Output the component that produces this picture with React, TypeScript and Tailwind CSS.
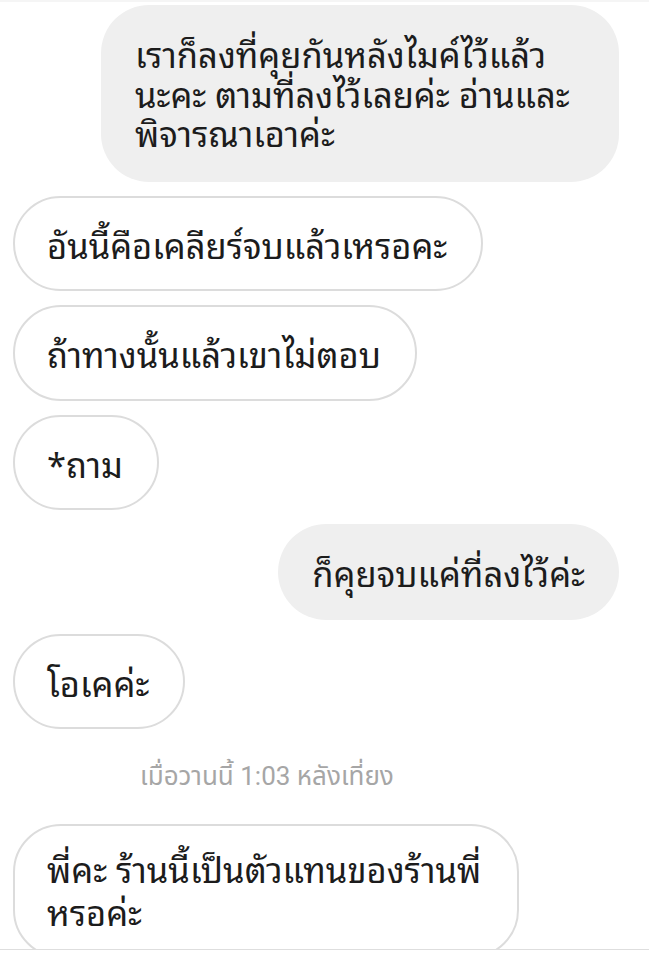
import React from "react";

const font = { fontFamily: '"Noto Sans Thai Looped", "Noto Sans Thai", "Noto Sans", Roboto, sans-serif' };

function Left({ children, className = "" }: { children: React.ReactNode; className?: string }) {
  return (
    <div className="flex justify-start">
      <div
        className={`bg-white border-2 border-[#dcdcdc] rounded-[48px] pl-[32px] pr-[34px] py-[24px] text-[34.5px] leading-[43.5px] text-[#1c1c1c] whitespace-nowrap ${className}`}
      >
        {children}
      </div>
    </div>
  );
}

function Right({ children, className = "" }: { children: React.ReactNode; className?: string }) {
  return (
    <div className="flex justify-end">
      <div
        className={`bg-[#efefef] rounded-[48px] pl-[34px] pr-[34px] py-[26px] text-[34.5px] leading-[43.5px] text-[#1c1c1c] whitespace-nowrap ${className}`}
      >
        {children}
      </div>
    </div>
  );
}

export default function App() {
  return (
    <div className="w-[649px] h-[960px] bg-white overflow-hidden flex flex-col" style={font}>
      <div className="h-[2px] bg-[#f5f5f5] shrink-0" />
      <div className="h-[947px] shrink-0 overflow-hidden flex flex-col gap-[14px] pl-[13px] pr-[30px] pt-[3px]">
        <Right className="w-[518px] rounded-[44px] !pt-[28px] !pb-[30px] !leading-[39.5px]">
          เราก็ลงที่คุยกันหลังไมค์ไว้แล้ว
          <br />
          นะคะ ตามที่ลงไว้เลยค่ะ อ่านและ
          <br />
          พิจารณาเอาค่ะ
        </Right>
        <Left>อันนี้คือเคลียร์จบแล้วเหรอคะ</Left>
        <Left>ถ้าทางนั้นแล้วเขาไม่ตอบ</Left>
        <Left>*ถาม</Left>
        <Right>ก็คุยจบแค่ที่ลงไว้ค่ะ</Right>
        <Left>โอเคค่ะ</Left>
        <div
          className="flex justify-start pl-[127px] pt-[19px] pb-[20px] text-[26px] leading-[28px] text-[#a6a6a6] whitespace-nowrap"
          style={{ fontFamily: 'Roboto, "Noto Sans Thai", sans-serif' }}
        >
          เมื่อวานนี้ 1:03 หลังเที่ยง
        </div>
        <Left className="w-[506px] rounded-[44px] !leading-[43px] !pt-[20px]">
          พี่คะ ร้านนี้เป็นตัวแทนของร้านพี่
          <br />
          หรอค่ะ
        </Left>
      </div>
      <div className="flex-1 border-t border-[#dedede] bg-white" />
    </div>
  );
}
